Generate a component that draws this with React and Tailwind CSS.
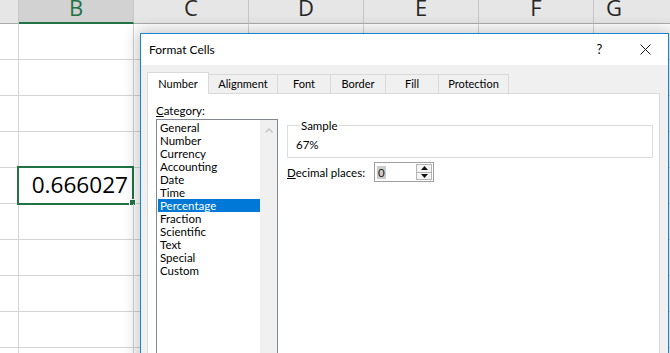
import React from 'react';

const COLS = ['B', 'C', 'D', 'E', 'F'];
const CATEGORIES = [
  'General',
  'Number',
  'Currency',
  'Accounting',
  'Date',
  'Time',
  'Percentage',
  'Fraction',
  'Scientific',
  'Text',
  'Special',
  'Custom',
];
const TABS = [
  { label: 'Number', w: 'w-[62px]' },
  { label: 'Alignment', w: 'w-[70px]' },
  { label: 'Font', w: 'w-[54px]' },
  { label: 'Border', w: 'w-[56px]' },
  { label: 'Fill', w: 'w-[54px]' },
  { label: 'Protection', w: 'w-[71px]' },
];

function SheetRow({ index }) {
  return (
    <div className="flex h-[36px] shrink-0 border-b border-[#d4d4d4]">
      <div className="w-[19px] shrink-0 border-r border-[#d4d4d4]" />
      {COLS.map((c) => (
        <div key={c} className="relative flex w-[115px] shrink-0 items-end justify-end border-r border-[#d4d4d4] pb-[7px] pr-[5px]">
          {index === 4 && c === 'B' && (
            <>
              <span className="font-['Open_Sans',sans-serif] text-[22.6px] leading-[22px] text-black">0.666027</span>
              {/* active cell outline + fill handle */}
              <div className="absolute -left-[2px] -top-[2px] -right-[1px] -bottom-[2px] border-2 border-[#217346]" />
              <div className="absolute -right-[3px] -bottom-[3px] h-[7px] w-[7px] border border-white bg-[#217346]" />
            </>
          )}
        </div>
      ))}
      <div className="flex-1" />
    </div>
  );
}

function Dialog() {
  return (
    <div className="absolute left-[140px] top-[33px] flex h-[340px] w-[529px] flex-col border border-[#1883d7] bg-[#f0f0f0] font-['Lato',sans-serif] text-black shadow-[0_0_14px_3px_rgba(0,0,0,0.22)]">
      <div className="flex h-[31px] shrink-0 items-center bg-white pl-[8px]">
        <span className="text-[12px] leading-[14px]">Format Cells</span>
        <div className="ml-auto flex h-full">
          <div className="flex w-[45px] items-center justify-center text-[13px]">?</div>
          <div className="flex w-[46px] items-center justify-center">
            <svg width="11" height="11" viewBox="0 0 11 11" fill="none" stroke="#1a1a1a" strokeWidth="1">
              <path d="M0.5 0.5L10.5 10.5M10.5 0.5L0.5 10.5" />
            </svg>
          </div>
        </div>
      </div>

      <div className="ml-[6px] mt-[7px] flex h-[21px] shrink-0 items-end">
        {TABS.map((t, i) =>
          i === 0 ? (
            <div key={t.label} className={`relative z-10 -mb-px flex h-[22px] ${t.w} justify-center border border-b-0 border-[#d9d9d9] bg-white pt-[4px] text-[11px] leading-[13px]`}>
              {t.label}
            </div>
          ) : (
            <div key={t.label} className={`-ml-px flex h-[19px] ${t.w} justify-center border border-b-0 border-[#d9d9d9] bg-[#f0f0f0] pt-[2px] text-[11px] leading-[13px]`}>
              {t.label}
            </div>
          )
        )}
      </div>

      <div className="ml-[6px] mr-[8px] flex flex-1 border border-[#d9d9d9] bg-white">
        <div className="ml-[8px] flex flex-col pt-[10px]">
          <div className="text-[11.5px] leading-[13px]">
            <span className="underline">C</span>ategory:
          </div>
          <div className="mt-[2px] flex h-[260px] w-[122px] border border-[#828790]">
            <div className="flex-1 pl-px pt-px">
              {CATEGORIES.map((c) => (
                <div
                  key={c}
                  className={`h-[13px] pl-[2px] text-[11.5px] leading-[13px] ${c === 'Percentage' ? 'bg-[#0078d7] text-white' : ''}`}
                >
                  {c}
                </div>
              ))}
            </div>
            <div className="flex w-[17px] justify-center bg-[#f0f0f0] pt-[8px]">
              <svg width="8" height="5" viewBox="0 0 8 5" fill="none" stroke="#c2c2c2" strokeWidth="1.3">
                <path d="M0.5 4.5L4 1L7.5 4.5" />
              </svg>
            </div>
          </div>
        </div>

        <div className="ml-[9px] mr-[6px] flex flex-1 flex-col pt-[25px]">
          <fieldset className="border border-[#dcdcdc] pb-[6px] pl-[8px]">
            <legend className="ml-[4px] px-px text-[11.5px] leading-[13px]">Sample</legend>
            <div className="mt-[6px] text-[11.5px] leading-[13px]">67%</div>
          </fieldset>
          <div className="mt-[4px] flex h-[20px] items-center">
            <div className="w-[87px] text-[11.5px] leading-[13px]">
              <span className="underline">D</span>ecimal places:
            </div>
            <div className="flex h-[20px] w-[60px] items-center border border-[#a0a0a0] bg-white">
              <span className="ml-[2px] bg-[#cccccc] px-px text-[11.5px] leading-[13px] text-[#1a1a1a]">0</span>
              <div className="ml-auto mr-px flex h-[16px] w-[16px] flex-col border border-[#b4b4b4]">
                <div className="flex flex-1 items-center justify-center border-b border-[#b4b4b4] bg-[#f4f4f4]">
                  <svg width="7" height="4" viewBox="0 0 7 4"><path d="M0 4L3.5 0L7 4Z" fill="#111" /></svg>
                </div>
                <div className="flex flex-1 items-center justify-center bg-[#f4f4f4]">
                  <svg width="7" height="4" viewBox="0 0 7 4"><path d="M0 0L3.5 4L7 0Z" fill="#111" /></svg>
                </div>
              </div>
            </div>
          </div>
        </div>
      </div>
    </div>
  );
}

export default function App() {
  return (
    <div className="relative flex h-[353px] w-[670px] flex-col overflow-hidden bg-white">
      <div className="flex h-[24px] shrink-0 bg-[#e6e6e6] font-['Open_Sans',sans-serif] text-[22px] leading-[14px]">
        <div className="w-[19px] shrink-0 border-b border-r border-b-[#ababab] border-r-[#c6c6c6]" />
        {COLS.map((c) =>
          c === 'B' ? (
            <div key={c} className="flex w-[115px] shrink-0 justify-center border-b-2 border-r border-b-[#217346] border-r-[#c6c6c6] bg-[#d2d2d2] text-[#217346]">
              {c}
            </div>
          ) : (
            <div key={c} className="flex w-[115px] shrink-0 justify-center border-b border-r border-b-[#ababab] border-r-[#c6c6c6] text-[#262626]">
              {c}
            </div>
          )
        )}
        <div className="flex flex-1 justify-center border-b border-[#ababab] pr-[36px] text-[#262626]">G</div>
      </div>
      {Array.from({ length: 10 }).map((_, i) => (
        <SheetRow key={i} index={i} />
      ))}
      <Dialog />
    </div>
  );
}
